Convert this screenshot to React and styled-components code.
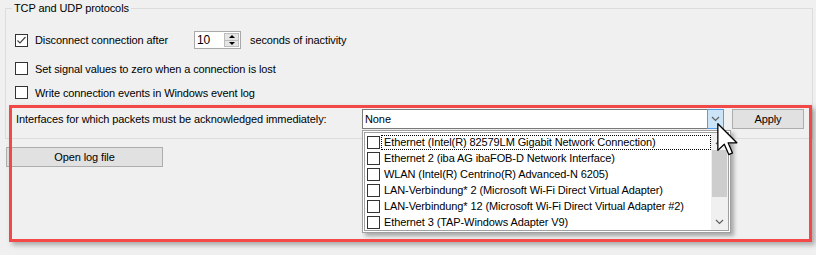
import React from 'react';
import styled, { createGlobalStyle } from 'styled-components';

const GlobalStyle = createGlobalStyle`
  html, body {
    margin: 0;
    padding: 0;
    background: #f0f0f0;
  }
  body {
    font-family: "Liberation Sans", Arial, sans-serif;
    font-size: 11px;
    letter-spacing: -0.1px;
    color: #000;
  }
`;

const Page = styled.div`
  position: relative;
  width: 816px;
  height: 255px;
  padding-left: 5px;
  box-sizing: border-box;
  overflow: hidden;
`;

const GroupBox = styled.fieldset`
  margin: 0;
  width: 808px;
  box-sizing: border-box;
  border: 1px solid #dcdcdc;
  padding: 16px 0 9px 0;
`;

const Legend = styled.legend`
  margin-left: 6px;
  padding: 0 2px;
  line-height: 16px;
`;

const Body = styled.div`
  padding-left: 9px;
`;

const Row = styled.div`
  display: flex;
  align-items: center;
  height: ${p => p.$h || 17}px;
  margin-top: ${p => p.$mt || 0}px;
`;

const CheckBox = styled.span`
  width: 13px;
  height: 13px;
  box-sizing: border-box;
  border: 1px solid #333;
  background: #fff;
  flex-shrink: 0;
  display: flex;
  align-items: center;
  justify-content: center;
`;

const CheckLabel = styled.span`
  margin-left: 7px;
  line-height: 16px;
  width: ${p => (p.$w ? `${p.$w}px` : 'auto')};
  white-space: nowrap;
`;

const Spinner = styled.div`
  display: flex;
  width: 47px;
  height: 18px;
  box-sizing: border-box;
  border: 1px solid #a9a9a9;
  background: #fff;
`;

const SpinValue = styled.span`
  flex: 1;
  padding-left: 2px;
  line-height: 16px;
  font-size: 12px;
`;

const SpinButtons = styled.div`
  width: 15px;
  display: flex;
  flex-direction: column;
  padding: 1px 1px 1px 0;
`;

const SpinButton = styled.div`
  flex: 1;
  background: #e5e5e5;
  border: 1px solid #bcbcbc;
  display: flex;
  align-items: center;
  justify-content: center;
  & + & {
    border-top: none;
  }
  &::before {
    content: '';
    border-left: 3px solid transparent;
    border-right: 3px solid transparent;
    ${p => (p.$down ? 'border-top: 3px solid #000;' : 'border-bottom: 3px solid #000;')}
  }
`;

const AfterText = styled.span`
  margin-left: 9px;
`;

const FieldLabel = styled.span`
  width: 346px;
  padding-left: 1px;
  white-space: nowrap;
`;

const Combo = styled.div`
  position: relative;
  width: 362px;
  height: 20px;
  box-sizing: border-box;
  border: 1px solid #7a7a7a;
  background: #fff;
  display: flex;
  align-items: center;
`;

const ComboText = styled.span`
  flex: 1;
  padding-left: 2px;
`;

const ComboButton = styled.div`
  width: 17px;
  height: 20px;
  margin: -1px -1px -1px 0;
  box-sizing: border-box;
  background: #cce4f7;
  border: 1px solid #569de5;
  display: flex;
  align-items: center;
  justify-content: center;
`;

const Button = styled.div`
  width: ${p => p.$w}px;
  height: 20px;
  box-sizing: border-box;
  background: #e1e1e1;
  border: 1px solid #adadad;
  display: flex;
  align-items: center;
  justify-content: center;
  margin-left: ${p => p.$ml || 0}px;
  margin-top: ${p => p.$mt || 0}px;
`;

const DropList = styled.div`
  position: absolute;
  top: 20px;
  left: -1px;
  width: 369px;
  height: 103px;
  box-sizing: border-box;
  border: 1px solid #a0a0a0;
  padding: 1px;
  background: #fff;
  box-shadow: 3px 3px 4px rgba(0, 0, 0, 0.3);
  z-index: 3;
`;

const ListInner = styled.div`
  height: 100%;
  box-sizing: border-box;
  border: 1px solid #a0a0a0;
  display: flex;
`;

const Items = styled.div`
  flex: 1;
  padding-top: 1px;
`;

const Item = styled.div`
  display: flex;
  align-items: center;
  height: 16px;
  padding-left: 2px;
`;

const ItemLabel = styled.span`
  flex: 1;
  margin-left: 1px;
  padding: 0 2px;
  line-height: 13px;
  border: 1px ${p => (p.$focus ? 'dotted #000' : 'solid transparent')};
  white-space: nowrap;
`;

const ScrollBar = styled.div`
  width: 17px;
  background: #f0f0f0;
  display: flex;
  flex-direction: column;
`;

const ScrollArrow = styled.div`
  height: 17px;
  display: flex;
  align-items: center;
  justify-content: center;
`;

const Thumb = styled.div`
  height: 47px;
  margin: 0 1px;
  background: #cdcdcd;
`;

const Track = styled.div`
  flex: 1;
`;

const RedFrame = styled.div`
  position: absolute;
  left: 9px;
  top: 105px;
  width: 803px;
  height: 137px;
  box-sizing: border-box;
  border: 3px solid #f24848;
  box-shadow: 3px 3px 5px rgba(0, 0, 0, 0.3);
  pointer-events: none;
  z-index: 4;
`;

const Cursor = styled.svg`
  position: absolute;
  left: 717px;
  top: 123px;
  z-index: 5;
`;

const Chevron = ({ up }) => (
  <svg width="9" height="6" viewBox="0 0 9 6">
    <polyline
      points={up ? '1,5 4.5,1.5 8,5' : '1,1 4.5,4.5 8,1'}
      fill="none"
      stroke="#606060"
      strokeWidth="1.2"
    />
  </svg>
);

const Check = ({ checked }) => (
  <CheckBox>
    {checked && (
      <svg width="11" height="11" viewBox="0 0 11 11">
        <polyline points="1.5,5.5 4,8 9.5,2" fill="none" stroke="#444" strokeWidth="1.2" />
      </svg>
    )}
  </CheckBox>
);

const adapters = [
  'Ethernet (Intel(R) 82579LM Gigabit Network Connection)',
  'Ethernet 2 (iba AG ibaFOB-D Network Interface)',
  'WLAN (Intel(R) Centrino(R) Advanced-N 6205)',
  'LAN-Verbindung* 2 (Microsoft Wi-Fi Direct Virtual Adapter)',
  'LAN-Verbindung* 12 (Microsoft Wi-Fi Direct Virtual Adapter #2)',
  'Ethernet 3 (TAP-Windows Adapter V9)',
];

export default function App() {
  return (
    <Page>
      <GlobalStyle />
      <GroupBox>
        <Legend>TCP and UDP protocols</Legend>
        <Body>
          <Row $h={16}>
            <Check checked />
            <CheckLabel $w={159}>Disconnect connection after</CheckLabel>
            <Spinner>
              <SpinValue>10</SpinValue>
              <SpinButtons>
                <SpinButton />
                <SpinButton $down />
              </SpinButtons>
            </Spinner>
            <AfterText>seconds of inactivity</AfterText>
          </Row>
          <Row $mt={12}>
            <Check />
            <CheckLabel>Set signal values to zero when a connection is lost</CheckLabel>
          </Row>
          <Row $mt={7}>
            <Check />
            <CheckLabel>Write connection events in Windows event log</CheckLabel>
          </Row>
          <Row $h={20} $mt={8}>
            <FieldLabel>Interfaces for which packets must be acknowledged immediately:</FieldLabel>
            <Combo>
              <ComboText>None</ComboText>
              <ComboButton>
                <Chevron />
              </ComboButton>
              <DropList>
                <ListInner>
                  <Items>
                    {adapters.map((name, i) => (
                      <Item key={name}>
                        <Check />
                        <ItemLabel $focus={i === 0}>{name}</ItemLabel>
                      </Item>
                    ))}
                  </Items>
                  <ScrollBar>
                    <ScrollArrow>
                      <Chevron up />
                    </ScrollArrow>
                    <Thumb />
                    <Track />
                    <ScrollArrow>
                      <Chevron />
                    </ScrollArrow>
                  </ScrollBar>
                </ListInner>
              </DropList>
            </Combo>
            <Button $w={72} $ml={8}>Apply</Button>
          </Row>
        </Body>
      </GroupBox>
      <Button $w={157} $ml={1} $mt={8}>Open log file</Button>
      <RedFrame />
      <Cursor width="21" height="33" viewBox="0 0 13 20.5">
        <path
          d="M0.5 0.5 V17 L4.5 13.2 L7.3 19.6 L9.6 18.6 L6.9 12.3 H12.3 Z"
          fill="#fff"
          stroke="#000"
          strokeWidth="0.8"
          strokeLinejoin="round"
        />
      </Cursor>
    </Page>
  );
}
